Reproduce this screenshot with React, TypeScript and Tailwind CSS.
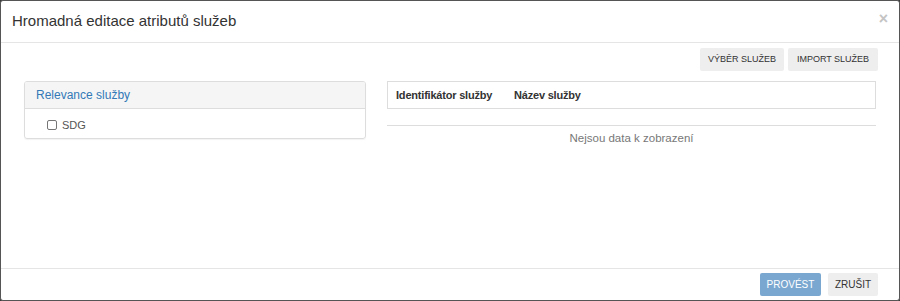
export default function App() {
  return (
    <div className="w-[900px] h-[301px] bg-[#3a3a3a] font-['Liberation_Sans',Arial,sans-serif] text-[#333]">
      <div className="w-[900px] h-[301px] bg-white border border-[#555] rounded-[3px] flex flex-col overflow-hidden">
        {/* Header */}
        <div className="h-[42px] shrink-0 border-b border-[#e5e5e5] flex items-center pl-[11px] pr-[11px]">
          <h4 className="text-[15px] leading-none text-[#333] mt-[-2px]">Hromadná editace atributů služeb</h4>
          <span className="ml-auto text-[#c4c4c4] text-[16px] font-bold leading-none mt-[-6px]">×</span>
        </div>

        {/* Body */}
        <div className="flex-1 flex flex-col px-[23px] pt-[5px]">
          <div className="flex justify-end gap-[4px] mr-[-2px]">
            <button className="h-[23px] w-[84px] bg-[#eee] rounded-[2px] text-[9px] text-[#333] uppercase">Výběr služeb</button>
            <button className="h-[23px] w-[90px] bg-[#eee] rounded-[2px] text-[9px] text-[#333] uppercase">Import služeb</button>
          </div>

          <div className="flex gap-[21px] mt-[10px]">
            <div className="w-[342px] h-[58px] border border-[#ddd] rounded-[3px] shadow-[0_1px_1px_rgba(0,0,0,0.05)] overflow-hidden">
              <div className="h-[27px] bg-[#f5f5f5] border-b border-[#ddd] flex items-center px-[11px] text-[12px] text-[#337ab7]">
                Relevance služby
              </div>
              <label className="flex items-center h-[30px] pl-[22px] pt-[2px] text-[11px] text-[#555]">
                <span className="w-[10px] h-[10px] border border-[#767676] rounded-[2px] mr-[5px]"></span>
                SDG
              </label>
            </div>

            <div className="flex-1 flex flex-col">
              <div className="h-[28px] border border-[#ddd] flex items-center text-[11px] font-bold text-[#333] tracking-[-0.2px]">
                <span className="pl-[8px] w-[126px]">Identifikátor služby</span>
                <span>Název služby</span>
              </div>
              <div className="mt-[16px] border-t border-[#ddd] pt-[4px] text-center text-[11.5px] text-[#777]">
                Nejsou data k zobrazení
              </div>
            </div>
          </div>
        </div>

        {/* Footer */}
        <div className="h-[32px] shrink-0 border-t border-[#e5e5e5] flex items-center justify-end gap-[7px] pr-[21px]">
          <button className="h-[23px] w-[61px] bg-[#7aa7d0] rounded-[2px] text-[10px] text-white uppercase">Provést</button>
          <button className="h-[23px] w-[50px] bg-[#eee] rounded-[2px] text-[10px] text-[#333] uppercase">Zrušit</button>
        </div>
      </div>
    </div>
  );
}
